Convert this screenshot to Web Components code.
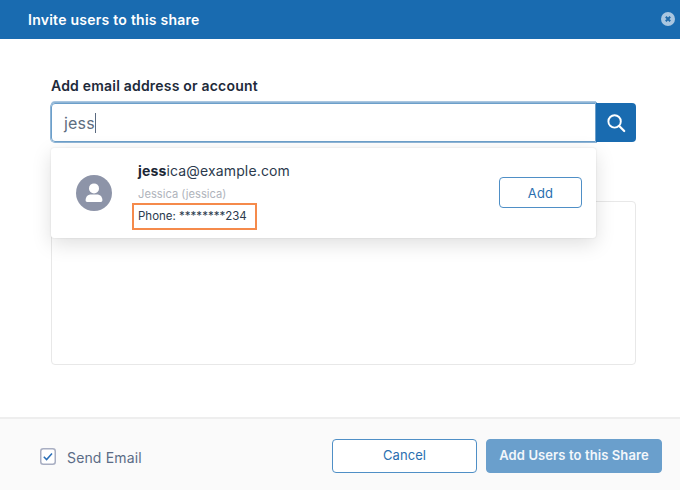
<!DOCTYPE html>
<html>
<head>
<meta charset="utf-8">
<title>Invite users</title>
<style>
  html, body { margin: 0; padding: 0; background: #fff; font-family: Inter, "Liberation Sans", sans-serif; }
</style>
</head>
<body>
<invite-dialog>
  <modal-header slot="header" title-text="Invite users to this share"></modal-header>
  <user-search slot="body" value="jess" label="Add email address or account">
    <user-result email-match="jess" email-rest="ica@example.com" name="Jessica (jessica)" phone="Phone: ********234"></user-result>
  </user-search>
  <modal-footer slot="footer"></modal-footer>
</invite-dialog>

<script>
class InviteDialog extends HTMLElement {
  constructor() {
    super();
    this.attachShadow({ mode: "open" });
    this.shadowRoot.innerHTML = `
      <style>
        :host { display: flex; flex-direction: column; width: 680px; height: 490px; overflow: hidden; }
        main { flex: 1; padding: 39px 44px 52px 51px; display: flex; min-height: 0; }
      </style>
      <slot name="header"></slot>
      <main><slot name="body"></slot></main>
      <slot name="footer"></slot>
    `;
  }
}

class ModalHeader extends HTMLElement {
  constructor() {
    super();
    this.attachShadow({ mode: "open" });
    this.shadowRoot.innerHTML = `
      <style>
        :host { display: flex; align-items: center; justify-content: space-between; height: 39px; background: #196bb0; padding: 0 5px 0 28px; color: #fff; }
        h1 { margin: 0; font: 600 14px Inter, sans-serif; letter-spacing: .25px; color: #fff; }
        svg { display: block; margin-top: -1px; }
      </style>
      <h1>${this.getAttribute("title-text")}</h1>
      <svg width="14" height="14" viewBox="0 0 14 14">
        <circle cx="7" cy="7" r="7" fill="#a9c6e0"/>
        <path d="M4.8 4.8l4.4 4.4M9.2 4.8l-4.4 4.4" stroke="#1f6aaa" stroke-width="2" fill="none"/>
      </svg>
    `;
  }
}

class UserSearch extends HTMLElement {
  constructor() {
    super();
    this.attachShadow({ mode: "open" });
    this.shadowRoot.innerHTML = `
      <style>
        :host { display: flex; flex-direction: column; flex: 1; position: relative; min-width: 0; }
        label { font: 600 14px/16px Inter, sans-serif; letter-spacing: .2px; color: #1e2a3a; margin-bottom: 9px; display: block; }
        .row { display: flex; height: 39px; }
        .field { flex: 1; box-sizing: border-box; border: 1px solid #6c9fca; border-radius: 4px 0 0 4px; box-shadow: 0 0 0 1px #8fb5d6, 0 -2px 0 0 #a9c6e0; padding-left: 12px; display: flex; align-items: center; font: 400 16px Inter, sans-serif; letter-spacing: .2px; color: #5d6d80; }
        .caret { display: inline-block; width: 1px; height: 20px; background: #5a6a80; }
        button { width: 40px; border: 0; padding: 0; background: #196bb0; border-radius: 0 4px 4px 0; display: flex; align-items: center; justify-content: center; }
        .box { flex: 1; margin-top: 59px; border: 1px solid #e8e8e8; border-radius: 4px; }
        .menu { position: absolute; left: 0; top: 70px; width: 545px; }
      </style>
      <label>${this.getAttribute("label")}</label>
      <div class="row">
        <div class="field"><span>${this.getAttribute("value")}</span><span class="caret"></span></div>
        <button aria-label="Search">
          <svg width="20" height="20" viewBox="0 0 20 20" fill="none" stroke="#fff">
            <circle cx="8.6" cy="8.4" r="6.2" stroke-width="1.9"/>
            <path d="M13.2 13l5 5" stroke-width="2.2" stroke-linecap="round"/>
          </svg>
        </button>
      </div>
      <div class="box"></div>
      <div class="menu"><slot></slot></div>
    `;
  }
}

class UserResult extends HTMLElement {
  constructor() {
    super();
    this.attachShadow({ mode: "open" });
    this.shadowRoot.innerHTML = `
      <style>
        :host { display: flex; align-items: center; box-sizing: border-box; height: 90px; background: #fff; border-radius: 3px; box-shadow: 0 0 2px rgba(0,0,0,.12), 0 6px 20px rgba(0,0,0,.13); padding: 0 14px 0 25px; font-family: Inter, sans-serif; }
        .avatar { width: 36px; height: 36px; flex: none; display: block; margin-right: 26px; }
        .info { flex: 1; min-width: 0; align-self: flex-start; padding-top: 14px; display: flex; flex-direction: column; align-items: flex-start; }
        .email { font-size: 14px; line-height: 18px; color: #2b3a4d; margin-bottom: 7px; letter-spacing: .15px; }
        .email b { font-weight: 700; color: #1b2635; }
        .name { font-size: 11.2px; line-height: 14px; color: #b0b4bc; margin-bottom: 4px; }
        .phone { font-size: 11.5px; line-height: 15px; color: #2b3a4d; outline: 2px solid #f58a4b; padding: 4px 8px 4px 4px; margin-left: -4px; }
      </style>
      <svg class="avatar" viewBox="0 0 36 36">
        <circle cx="18" cy="18" r="18" fill="#8d94a8"/>
        <circle cx="18" cy="13.4" r="5" fill="#fff"/>
        <path d="M9.6 25.6c0-4 2.4-6 5.4-6h6c3 0 5.4 2 5.4 6 0 .9-.7 1.4-1.4 1.4H11c-.7 0-1.4-.5-1.4-1.4z" fill="#fff"/>
      </svg>
      <div class="info">
        <div class="email"><b>${this.getAttribute("email-match")}</b>${this.getAttribute("email-rest")}</div>
        <div class="name">${this.getAttribute("name")}</div>
        <div class="phone">${this.getAttribute("phone")}</div>
      </div>
      <ui-button variant="outline" style="width:83px;height:31px;margin-bottom:1px;font-size:13px;letter-spacing:.2px">Add</ui-button>
    `;
  }
}

class UiButton extends HTMLElement {
  constructor() {
    super();
    this.attachShadow({ mode: "open" });
    const solid = this.getAttribute("variant") === "solid";
    this.shadowRoot.innerHTML = `
      <style>
        :host { display: inline-flex; align-items: center; justify-content: center; box-sizing: border-box; border-radius: 4px; font-family: Inter, sans-serif; flex: none;
          ${solid
            ? "background:#6a9fcc;border:1px solid #6a9fcc;color:#f3f7fb;font-weight:600;"
            : "background:#fff;border:1px solid #4f8fc6;color:#2a6fb0;font-weight:400;"}
        }
      </style>
      <slot></slot>
    `;
  }
}

class ModalFooter extends HTMLElement {
  constructor() {
    super();
    this.attachShadow({ mode: "open" });
    this.shadowRoot.innerHTML = `
      <style>
        :host { display: flex; align-items: center; box-sizing: border-box; height: 73px; background: #fafafa; border-top: 2px solid #eeeeee; padding: 3px 18px 0 40px; font-family: Inter, sans-serif; }
        .check { display: flex; align-items: center; gap: 11px; font-size: 14px; letter-spacing: .15px; color: #5b6c86; flex: 1; }
        .check span { padding-top: 2px; }
        svg { display: block; }
        .actions { display: flex; gap: 9px; }
      </style>
      <div class="check">
        <svg width="16" height="17" viewBox="0 0 16 17">
          <rect x=".75" y=".75" width="14.5" height="15.5" rx="2.5" fill="#fff" stroke="#a8aec2" stroke-width="1.5"/>
          <path d="M3.8 8.8l2.8 2.8 5.4-6" fill="none" stroke="#2a6fb8" stroke-width="1.5"/>
        </svg>
        <span>Send Email</span>
      </div>
      <div class="actions">
        <ui-button variant="outline" style="width:145px;height:34px;padding-bottom:2px;font-size:13px;letter-spacing:.05px">Cancel</ui-button>
        <ui-button variant="solid" style="width:176px;height:34px;padding-bottom:2px;font-size:13px;letter-spacing:.1px">Add Users to this Share</ui-button>
      </div>
    `;
  }
}

customElements.define("ui-button", UiButton);
customElements.define("modal-header", ModalHeader);
customElements.define("user-result", UserResult);
customElements.define("user-search", UserSearch);
customElements.define("modal-footer", ModalFooter);
customElements.define("invite-dialog", InviteDialog);
</script>
</body>
</html>
